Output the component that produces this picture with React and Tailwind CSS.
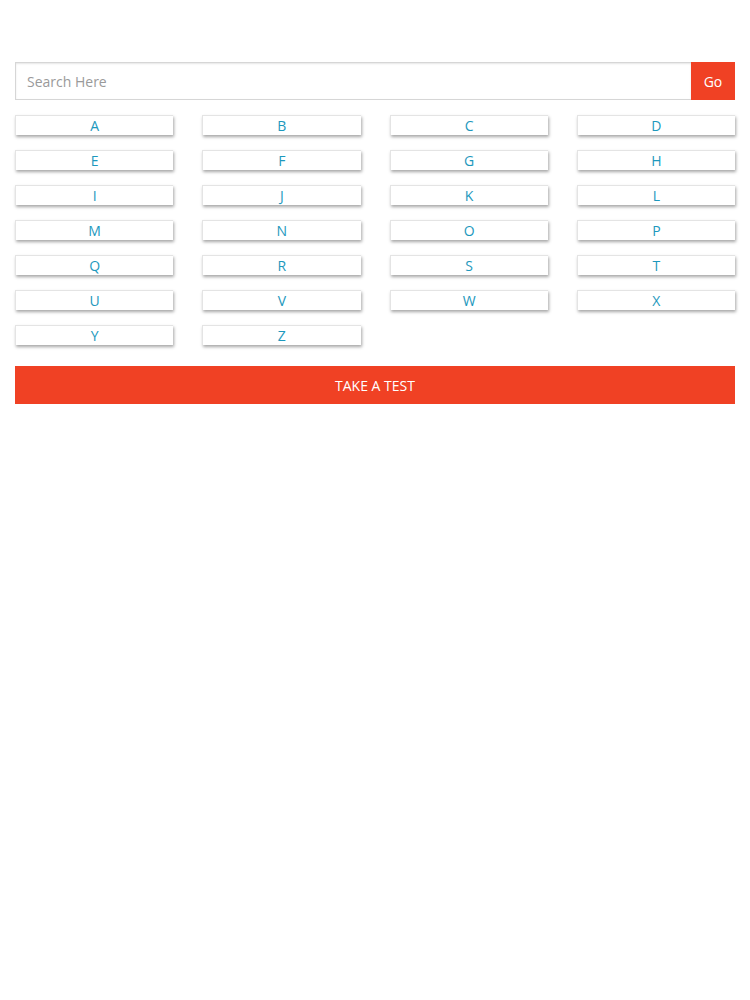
import React from 'react';

const LETTERS = 'ABCDEFGHIJKLMNOPQRSTUVWXYZ'.split('');

const App = () => {
  return (
    <div
      className="min-h-[1000px] bg-white px-[15px] pt-[62px]"
      style={{ fontFamily: '"Open Sans", "Liberation Sans", sans-serif' }}
    >
      {/* Search bar */}
      <div className="flex h-[38px]">
        <input
          type="text"
          placeholder="Search Here"
          className="flex-1 min-w-0 border border-[#d6d6d6] border-r-0 px-[11px] text-[14px] text-[#555] placeholder:text-[#9a9a9a] outline-none shadow-[inset_0_1px_2px_rgba(0,0,0,0.1)]"
        />
        <button className="w-[44px] bg-[#f04124] text-[14px] text-white">Go</button>
      </div>

      {/* Alphabet */}
      <div className="mt-[15px] grid grid-cols-4 gap-x-[29px] gap-y-[15px]">
        {LETTERS.map((l) => (
          <button
            key={l}
            className="h-[20px] border-t border-l border-[#e4e4e4] bg-white text-[14px] leading-[20px] text-[#1d98bd] shadow-[1px_2px_3px_rgba(0,0,0,0.35)]"
          >
            {l}
          </button>
        ))}
      </div>

      {/* Take a test */}
      <button className="mt-[21px] h-[38px] w-full bg-[#f04124] text-[14px] text-white">
        TAKE A TEST
      </button>
    </div>
  );
};

export default App;
